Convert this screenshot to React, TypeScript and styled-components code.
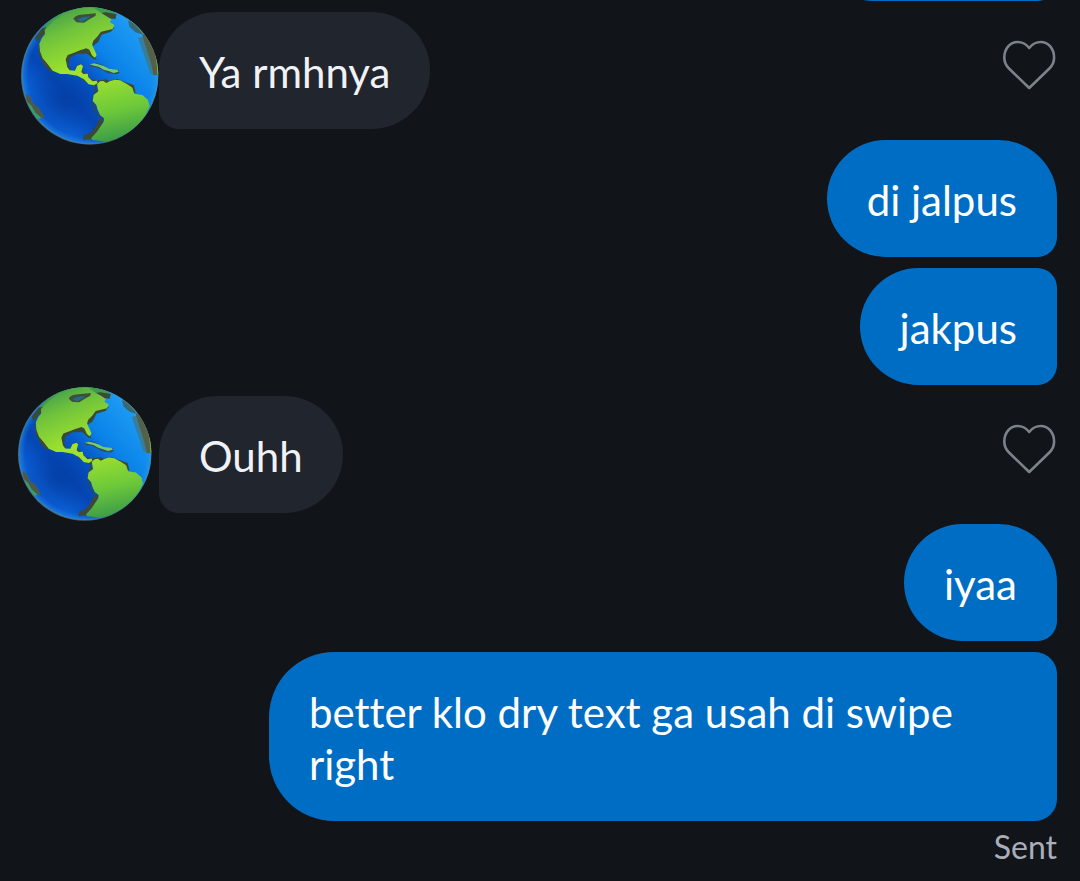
import React from "react";
import styled, { createGlobalStyle, css } from "styled-components";

const GlobalStyle = createGlobalStyle`
  *, *::before, *::after { box-sizing: border-box; }
  body {
    margin: 0;
    background: #111418;
    font-family: Lato, "Liberation Sans", sans-serif;
    font-variant-ligatures: none;
  }
`;

const Conversation = styled.main`
  display: flex;
  flex-direction: column;
  min-height: 100vh;
  overflow: hidden;
  padding: 0 23px 14px 20px;
  background: #111418;
`;

const MessageList = styled.ol`
  display: flex;
  flex-direction: column;
  gap: 11px;
  margin: 0;
  padding: 0;
  list-style: none;
`;

const Message = styled.li<{ $own?: boolean }>`
  display: flex;
  align-items: flex-start;
  justify-content: ${(p) => (p.$own ? "flex-end" : "flex-start")};
`;

/* The message above the scroll position: only its lower edge is in view. */
const ScrolledMessage = styled(Message)`
  align-items: flex-end;
  height: 1px;
  overflow: hidden;
`;

const Bubble = styled.p<{ $own?: boolean; $follows?: boolean }>`
  flex: none;
  max-width: 76%;
  min-height: 117px;
  margin: 0;
  padding: 34px 40px 31px;
  font-size: 42px;
  line-height: 52px;
  font-weight: 400;
  ${(p) =>
    p.$own
      ? css`
          color: #ffffff;
          background: #006dc4;
          border-radius: 65px ${p.$follows ? "22px" : "65px"} 22px 65px;
        `
      : css`
          color: #f0f2f6;
          background: #21252e;
          border-radius: 65px 65px 65px 22px;
        `}
`;

const ScrolledBubble = styled(Bubble)`
  width: 242px;
`;

const AvatarSlot = styled.div`
  flex: none;
  display: flex;
  justify-content: flex-start;
  width: 139px;
  height: 117px;
`;

const AvatarImage = styled.svg<{ $compact?: boolean }>`
  flex: none;
  display: block;
  width: ${(p) => (p.$compact ? 136 : 140)}px;
  height: ${(p) => (p.$compact ? 136 : 140)}px;
  margin: ${(p) => (p.$compact ? "-10px 0 0 -3px" : "-6px 0 0")};
`;

const LikeButton = styled.button`
  flex: none;
  margin: 28px 0 0 auto;
  padding: 0;
  border: 0;
  background: none;
  cursor: pointer;

  svg {
    display: block;
  }
`;

const Status = styled.p`
  margin: 6px 0 0;
  color: #a9aeba;
  font-size: 32px;
  line-height: 40px;
  text-align: right;
`;

function Globe({ id, compact }: { id: string; compact?: boolean }) {
  const url = (name: string) => `url(#${id}-${name})`;
  return (
    <AvatarImage $compact={compact} viewBox="60 17 420 420" role="img" aria-label="Globe avatar">
      <defs>
        <linearGradient id={`${id}-sea`} x1="0.85" y1="0.15" x2="0.2" y2="0.75">
          <stop offset="0" stopColor="#1e9cf4" />
          <stop offset="0.36" stopColor="#0a82e8" />
          <stop offset="0.56" stopColor="#0658c8" />
          <stop offset="0.8" stopColor="#0546b4" />
          <stop offset="1" stopColor="#0a5ed4" />
        </linearGradient>
        <radialGradient id={`${id}-rim`}>
          <stop offset="0.9" stopColor="#2e9be8" stopOpacity="0" />
          <stop offset="0.97" stopColor="#2e9be8" stopOpacity="0.35" />
          <stop offset="1" stopColor="#4b8a9c" stopOpacity="0.9" />
        </radialGradient>
        <radialGradient id={`${id}-deep`}>
          <stop offset="0" stopColor="#033ca0" stopOpacity="0.75" />
          <stop offset="1" stopColor="#033ca0" stopOpacity="0" />
        </radialGradient>
        <linearGradient id={`${id}-north`} x1="0.25" y1="0" x2="0.55" y2="0.75">
          <stop offset="0" stopColor="#3f9b4c" />
          <stop offset="0.4" stopColor="#6fc23c" />
          <stop offset="1" stopColor="#9fe32d" />
        </linearGradient>
        <linearGradient id={`${id}-south`} x1="0.3" y1="0" x2="0.5" y2="1">
          <stop offset="0" stopColor="#98de30" />
          <stop offset="0.5" stopColor="#6cc83a" />
          <stop offset="1" stopColor="#389849" />
        </linearGradient>
        <clipPath id={`${id}-disc`}>
          <circle cx="270" cy="226" r="205" />
        </clipPath>
        <filter id={`${id}-soft`} x="-10%" y="-10%" width="120%" height="120%">
          <feGaussianBlur stdDeviation="2" />
        </filter>
      </defs>
      <circle cx="269" cy="227" r="206" fill="#44626e" filter={url("soft")} />
      <g clipPath={url("disc")}>
        <circle cx="270" cy="226" r="205" fill={url("sea")} />
        <ellipse cx="190" cy="300" rx="120" ry="105" fill={url("deep")} />
        <circle cx="270" cy="226" r="206" fill={url("rim")} />
        <path
          fill="#3f9b4c"
          d="M120 96L140 70 175 40 215 22 270 16 320 26 350 40 340 52 250 60 160 90 134 100z"
        />
        <g fill="#3b4936">
          <path d="M105 112l22-28 14-3-7 19-24 24z" />
          <path d="M292 40L318 36 350 42 346 56 320 54z" />
          <path d="M117 120L116 160 132 194 150 213 160 211 140 184zM198 156L242 144 268 143 278 158 290 178 280 176 262 160 232 160 210 172 205 192 212 208 198 213 190 182z" />
          <path d="M292 92L344 81 333 94 305 103 294 126 279 137 275 122z" />
          <path d="M225 203L239 191 249 194 247 212 265 223 267 234 290 241 318 237 328 242 350 236 402 255 407 278 352 255 288 257 251 241z" />
          <path d="M285 252L295 280 280 307 290 337 311 360 294 393 275 415 249 419 252 405 272 397 289 375 301 352 286 337 276 307 284 276z" />
        </g>
        <path
          fill={url("north")}
          d="M134 88L160 62 190 40 228 25 277 20 300 36 322 49 334 57 330 66 343 74 338 86 303 94 293 108 280 121 276 133 284 150 290 164 284 172 276 165 268 148 259 144 240 150 222 157 203 164 197 177 202 201 209 210 225 211 231 197 243 192 249 197 244 215 250 221 263 220 265 231 278 243 290 241 293 248 282 255 266 252 252 237 232 226 201 221 181 221 158 211 142 190 128 174 120 153 118 130 126 112 135 101z"
        />
        <path fill="#3f4e39" d="M220 56q4-11 22-13l46-4-2 8-18 10-16 10-22-1z" />
        <path fill="#1f6d8c" d="M230 58l18-8 24-2-12 9-14 7z" />
        <path
          fill={url("south")}
          d="M291 252L300 243 310 242 319 248 331 242 345 238 360 240 382 252 397 262 403 280 427 284 444 299 449 318 435 347 414 373 385 398 354 415 320 424 278 419 273 414 291 394 311 364 312 354 300 344 292 326 289 314 278 302 281 284 295 273z"
        />
        <path fill="#344f5b" d="M267 194l20-7 22 7 17 13 28 1 5 9-8 5-27-3-17-10-20-9-13 1z" />
        <path fill="#70cc76" d="M269 192l14-3 16 4 12 4 16 8 25 3 4 6-15 4-13-5-17-5-15-9-14-3z" />
        <g filter={url("soft")}>
          <path fill="#347f9c" d="M414 112l18-3 22 66 10 50-14-6-17-52z" />
          <path fill="#386776" d="M384 61l16 5 30 30-6 6-18-6-17-16z" />
          <path fill="#55604a" d="M426 101l16 2 20 36 12 42 3 42-16 2-8-36-14-44z" />
          <path fill="#4d5a44" d="M77 280l14 9 8 21 16 10 17 27-2 9-22-16-27-34z" />
        </g>
        <path fill="#389c6f" d="M80 303l15 14 10 19 19 17-16 4-18-21z" />
        <path d="M442 105l16 27 10 31 5 35 1 24" fill="none" stroke="#88bd42" strokeWidth="4" />
        <path d="M393 62l18 16 17 20" fill="none" stroke="#679b58" strokeWidth="3" />
      </g>
    </AvatarImage>
  );
}

function Like() {
  return (
    <LikeButton type="button" aria-label="Like message">
      <svg width="55" height="50" viewBox="0 0 55 50" fill="none" aria-hidden="true">
        <path
          d="M27.2 48L7 28.5C4 25.5 2.3 22 2.3 17.7C2.3 8.5 8.2 2 15.5 2C20.2 2 24.3 4.2 27.2 8C30.1 4.2 34.2 2 38.9 2C46.2 2 52.1 8.5 52.1 17.7C52.1 22 50.4 25.5 47.4 28.5Z"
          stroke="#7c828b"
          strokeWidth="2.6"
          strokeLinejoin="round"
        />
      </svg>
    </LikeButton>
  );
}

type Entry = { text: string; own?: boolean; follows?: boolean; compact?: boolean };

const entries: Entry[] = [
  { text: "Ya rmhnya" },
  { text: "di jalpus", own: true },
  { text: "jakpus", own: true, follows: true },
  { text: "Ouhh", compact: true },
  { text: "iyaa", own: true },
  { text: "better klo dry text ga usah di swipe right", own: true, follows: true },
];

export default function App() {
  return (
    <>
      <GlobalStyle />
      <Conversation>
        <MessageList>
          <ScrolledMessage $own aria-hidden="true">
            <ScrolledBubble $own $follows />
          </ScrolledMessage>
          {entries.map((entry, i) => (
            <Message key={entry.text} $own={entry.own}>
              {!entry.own && (
                <AvatarSlot>
                  <Globe id={`globe${i}`} compact={entry.compact} />
                </AvatarSlot>
              )}
              <Bubble $own={entry.own} $follows={entry.follows}>
                {entry.text}
              </Bubble>
              {!entry.own && <Like />}
            </Message>
          ))}
        </MessageList>
        <Status>Sent</Status>
      </Conversation>
    </>
  );
}
